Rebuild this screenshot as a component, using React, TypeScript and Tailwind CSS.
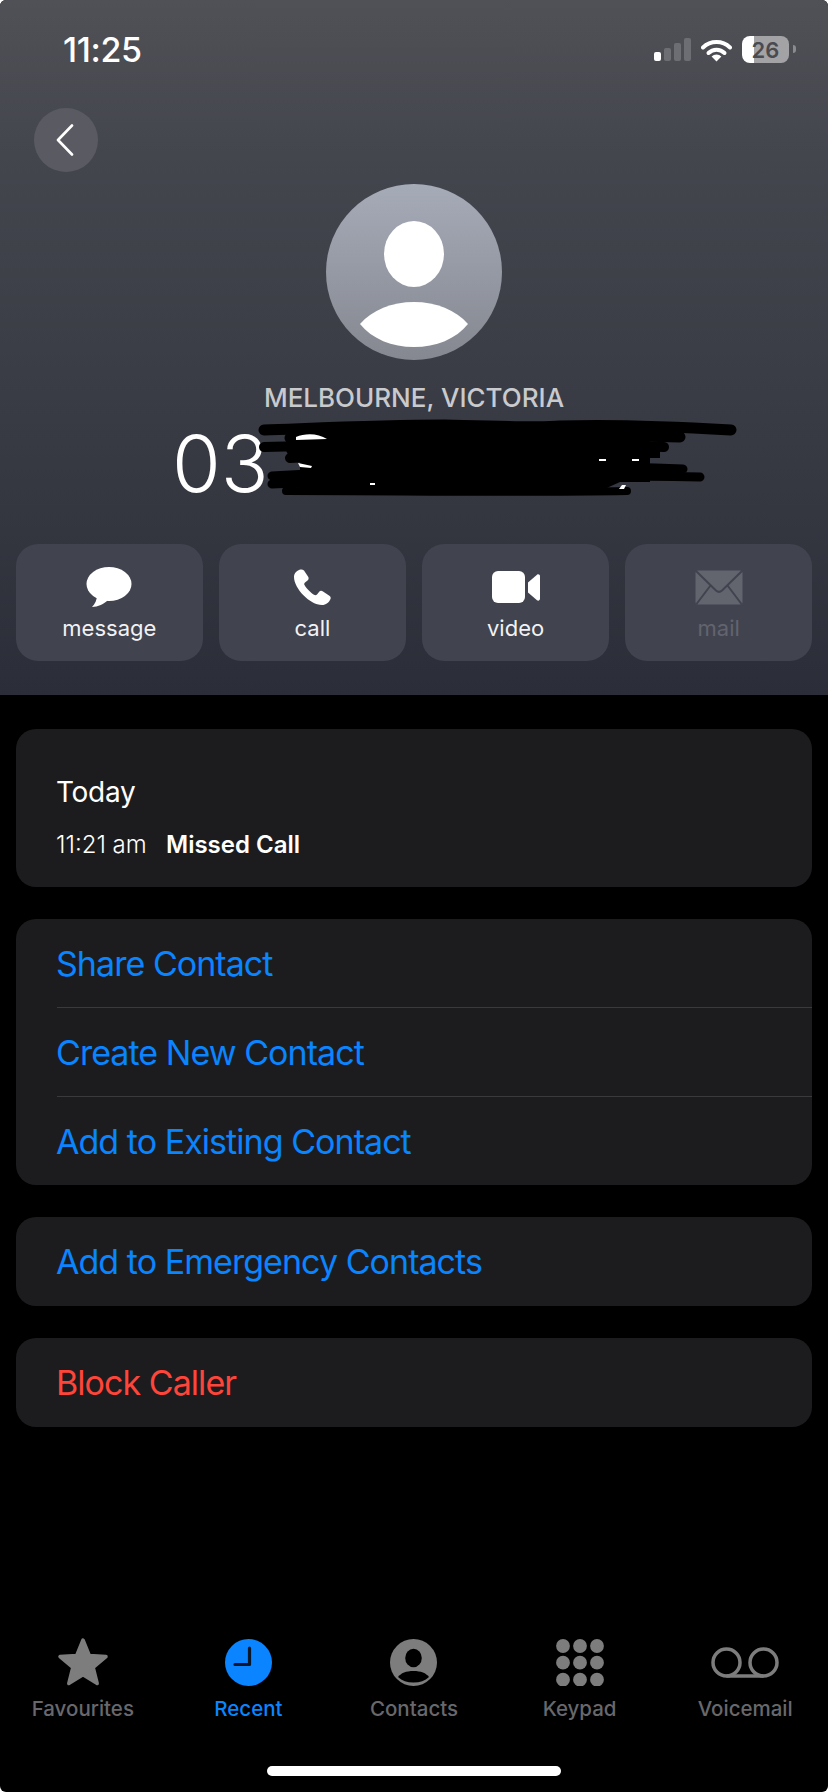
import React from 'react';

const actions = ['message', 'call', 'video', 'mail'];

const ActionIcon = ({ name }: { name: string }) => {
  if (name === 'message') {
    return (
      <svg width="46" height="41" viewBox="0 0 46 41" className="mt-[23px]">
        <ellipse cx="23" cy="17" rx="22.5" ry="17" fill="#fff" />
        <path d="M11 28 C11 33 9 37 6 40 C12 40 18 37 22 33 Z" fill="#fff" />
      </svg>
    );
  }
  if (name === 'call') {
    return (
      <svg width="37" height="38" viewBox="0 0 37 37" className="mt-[24px]">
        <path
          d="M5 1.5C2.5 2.5 0 5 0 8.5C0 20 16 36.5 28 36.5C32 36.5 35 34 36.5 30.5C37 29 36.5 28 35 27L29 23C27.5 22 26 22.2 25 23.5L23 26C22 27 21 27 20 26.3C17 24.5 12.5 20 10.8 17C10 16 10 15 11 14L13.5 12C14.8 11 15 9.5 14 8L10 2C8.5 0.8 7 0.8 5 1.5Z"
          fill="#fff"
        />
      </svg>
    );
  }
  if (name === 'video') {
    return (
      <svg width="48" height="33" viewBox="0 0 48 33" className="mt-[27px]">
        <rect x="0" y="0" width="33" height="32" rx="6" fill="#fff" />
        <path d="M36 11.5 L45 3.8 C46.2 2.8 48 3.6 48 5.2 L48 27.8 C48 29.4 46.2 30.2 45 29.2 L36 21.5 Z" fill="#fff" />
      </svg>
    );
  }
  return (
    <svg width="48" height="35" viewBox="0 0 48 35" className="mt-[26px]">
      <rect x="0.5" y="0.5" width="47" height="34" rx="2.5" fill="#62646e" />
      <path d="M1 1 L21 20.5 C23 22.3 25 22.3 27 20.5 L47 1" fill="none" stroke="#41434f" strokeWidth="2" />
      <path d="M1.5 34 L15.5 15.5 M46.5 34 L32.5 15.5" fill="none" stroke="#41434f" strokeWidth="2" />
    </svg>
  );
};

const tabs = ['Favourites', 'Recent', 'Contacts', 'Keypad', 'Voicemail'];

const TabIcon = ({ name }: { name: string }) => {
  if (name === 'Favourites') {
    return (
      <svg width="52" height="50" viewBox="0 0 52 50">
        <polygon
          points="26,3 32.4,18.6 49,19.6 36.2,30.4 40.2,46.5 26,37.8 11.8,46.5 15.8,30.4 3,19.6 19.6,18.6"
          fill="#7d7d7d"
          stroke="#7d7d7d"
          strokeWidth="3.5"
          strokeLinejoin="round"
        />
      </svg>
    );
  }
  if (name === 'Recent') {
    return (
      <svg width="47" height="47" viewBox="0 0 47 47" className="mt-[2px]">
        <circle cx="23.5" cy="23.5" r="23.5" fill="#0a84ff" />
        <path d="M24.5 9 L24.5 25.5 L10 25.5" fill="none" stroke="#07182e" strokeWidth="3.2" strokeLinecap="round" strokeLinejoin="round" />
      </svg>
    );
  }
  if (name === 'Contacts') {
    return (
      <svg width="47" height="47" viewBox="0 0 47 47" className="mt-[2px]">
        <circle cx="23.5" cy="23.5" r="23.5" fill="#7d7d7d" />
        <ellipse cx="23.5" cy="19" rx="8.3" ry="9.2" fill="#000" />
        <path d="M8 38 C11 34 16 32 23.5 32 C31 32 36 34 39 38 C35 41.8 30 43.5 23.5 43.5 C17 43.5 12 41.8 8 38 Z" fill="#000" />
      </svg>
    );
  }
  if (name === 'Keypad') {
    return (
      <svg width="48" height="47" viewBox="0 0 48 47" className="mt-[2px]">
        {[7, 23.7, 40.7].map((y) =>
          [7, 24, 41].map((x) => <circle key={`${x}-${y}`} cx={x} cy={y} r="6.9" fill="#7d7d7d" />)
        )}
      </svg>
    );
  }
  return (
    <svg width="68" height="32" viewBox="0 0 68 32" className="mt-[10px]">
      <circle cx="15.5" cy="15.5" r="13.5" fill="none" stroke="#7d7d7d" strokeWidth="3.5" />
      <circle cx="52.5" cy="15.5" r="13.5" fill="none" stroke="#7d7d7d" strokeWidth="3.5" />
      <path d="M15.5 29 L52.5 29" stroke="#7d7d7d" strokeWidth="3.5" />
    </svg>
  );
};

const Row = ({ label, red, short }: { label: string; red?: boolean; short?: boolean }) => (
  <div
    className={`${short ? 'h-[88px]' : 'h-[89px]'} pl-[40px] flex items-center text-[34px] tracking-[-0.028em] ${
      red ? 'text-[#ff453a]' : 'text-[#0a84ff]'
    }`}
  >
    {label}
  </div>
);

const App = () => {
  return (
    <div className="w-[828px] h-[1792px] bg-white">
      <div
        className="w-full h-full bg-black rounded-[6px] overflow-hidden flex flex-col text-white"
        style={{ fontFamily: 'Inter, "Liberation Sans", sans-serif' }}
      >
        {/* Header */}
        <header className="relative h-[695px] shrink-0 flex flex-col bg-[linear-gradient(180deg,#505156_0%,#44464e_22%,#3c3e47_50%,#2b2d38_100%)]">
          <div className="h-[108px] shrink-0 flex justify-between pl-[63px] pr-[32px] pt-[36px]">
            <span className="text-[34px] font-medium leading-[28px] tracking-[-0.01em]">11:25</span>
            <div className="flex items-start">
              <div className="flex items-end gap-[3px] h-[23px] mt-[2px]">
                <div className="w-[7px] h-[9px] rounded-[2px] bg-white" />
                <div className="w-[7px] h-[13px] rounded-[2px] bg-[#6d6e73]" />
                <div className="w-[7px] h-[18px] rounded-[2px] bg-[#6d6e73]" />
                <div className="w-[7px] h-[23px] rounded-[2px] bg-[#6d6e73]" />
              </div>
              <svg width="31" height="23" viewBox="0 0 31 23" className="ml-[10px] mt-[3px]">
                <path d="M2 8.5A19.5 19.5 0 0 1 29 8.5" fill="none" stroke="#fff" strokeWidth="4" strokeLinecap="round" />
                <path d="M7.5 14A11.5 11.5 0 0 1 23.5 14" fill="none" stroke="#fff" strokeWidth="4" strokeLinecap="round" />
                <path d="M15.5 22.5L10.6 17.5A6.8 6.8 0 0 1 20.4 17.5Z" fill="#fff" />
              </svg>
              <div className="ml-[10px] w-[47px] h-[27px] rounded-[8px] bg-[linear-gradient(90deg,#fff_26%,#a3a3a6_26%)] flex items-center justify-center text-[22px] font-semibold leading-none text-[#4a4b50]">
                26
              </div>
              <div className="ml-[4px] mt-[9px] w-[3px] h-[8px] rounded-r-[3px] bg-[#8a8b8f]" />
            </div>
          </div>

          <button className="ml-[34px] w-16 h-16 shrink-0 rounded-full bg-[#5a5b62] flex items-center justify-center">
            <svg width="18" height="32" viewBox="0 0 18 32" className="mr-[3px]">
              <path d="M16 1.5L2 16L16 30.5" fill="none" stroke="#fff" strokeWidth="2.6" strokeLinecap="round" strokeLinejoin="round" />
            </svg>
          </button>

          <div className="mt-3 self-center w-[176px] h-[176px] shrink-0 rounded-full bg-gradient-to-b from-[#a6abb8] to-[#858890]">
            <svg width="176" height="176" viewBox="0 0 176 176">
              <ellipse cx="88" cy="70" rx="30" ry="33" fill="#fff" />
              <path d="M34 140C46 126 66 118 88 118C110 118 130 126 142 140C130 155 110 163 88 163C66 163 46 155 34 140Z" fill="#fff" />
            </svg>
          </div>

          <p className="mt-[23px] text-center text-[26px] leading-[30px] font-medium text-[#c9cacd]">MELBOURNE, VICTORIA</p>
          <p className="mt-[5px] pl-[172px] text-[79px] leading-[90px] font-light">03</p>

          {/* scribbled-out phone number */}
          <svg width="828" height="695" viewBox="0 0 828 695" className="absolute left-0 top-0 pointer-events-none">
            <path d="M340 430H650V482H620L600 491H300V440Z" fill="#000" />
            <g fill="none" stroke="#000" strokeLinecap="round" strokeLinejoin="round">
              <path d="M264 430C320 428 380 425 445 425C500 426 540 428 560 426C620 424 680 427 731 430" strokeWidth="11" />
              <path d="M290 438C400 433 560 433 680 437" strokeWidth="11" />
              <path d="M264 447C400 443 540 443 664 447" strokeWidth="10" />
              <path d="M290 458C400 452 540 452 645 456" strokeWidth="10" />
              <path d="M272 476C400 468 560 464 683 469" strokeWidth="9" />
              <path d="M272 484C400 478 560 474 700 477" strokeWidth="9" />
              <path d="M286 491C400 491 520 493 627 491" strokeWidth="8" />
            </g>
            <path d="M284 447H660V458H290Z M296 440L330 442L296 446Z" fill="#000" />
            <path d="M298 463L312 466L311 468L300 467Z M370 483H375V485H370Z M599 459H606V461H599Z M632 459H639V461H632Z M619 489L622 485H626L624 489Z M296 437C305 433 318 433 327 439L296 440Z" fill="#fff" />
          </svg>

          <div className="mt-auto mb-[34px] px-4 grid grid-cols-4 gap-x-[16.5px]">
            {actions.map((a) => (
              <div key={a} className="h-[117px] rounded-[22px] bg-[#41434f] flex flex-col items-center">
                <div className="h-[71px]">
                  <ActionIcon name={a} />
                </div>
                <span className={`text-[22px] leading-[26px] ${a === 'mail' ? 'text-[#62646e]' : 'text-[#f2f2f4]'}`}>{a}</span>
              </div>
            ))}
          </div>
        </header>

        {/* Body */}
        <main className="pt-[34px] px-4 flex flex-col gap-[32px]">
          <section className="h-[158px] rounded-[20px] bg-[#1c1c1e] pl-[40px] pt-[46px]">
            <p className="text-[28px] leading-[34px] tracking-[-0.01em]">Today</p>
            <div className="mt-[22px] flex items-baseline text-[24px] leading-[28px]">
              <span className="w-[110px] font-light">11:21 am</span>
              <span className="font-semibold">Missed Call</span>
            </div>
          </section>

          <section className="rounded-[20px] bg-[#1c1c1e]">
            <Row label="Share Contact" short />
            <div className="ml-[41px] h-px bg-[#3a3a3c]" />
            <Row label="Create New Contact" short />
            <div className="ml-[41px] h-px bg-[#3a3a3c]" />
            <Row label="Add to Existing Contact" short />
          </section>

          <section className="rounded-[20px] bg-[#1c1c1e]">
            <Row label="Add to Emergency Contacts" />
          </section>

          <section className="rounded-[20px] bg-[#1c1c1e]">
            <Row label="Block Caller" red />
          </section>
        </main>

        {/* Tab bar */}
        <nav className="mt-auto grid grid-cols-5">
          {tabs.map((t) => (
            <div key={t} className="flex flex-col items-center">
              <div className="h-[59px]">
                <TabIcon name={t} />
              </div>
              <span className={`text-[20.5px] leading-[26px] font-medium ${t === 'Recent' ? 'text-[#0a84ff]' : 'text-[#68686c]'}`}>{t}</span>
            </div>
          ))}
        </nav>
        <div className="mt-[44px] mb-[16px] self-center w-[294px] h-[10px] rounded-full bg-white" />
      </div>
    </div>
  );
};

export default App;
